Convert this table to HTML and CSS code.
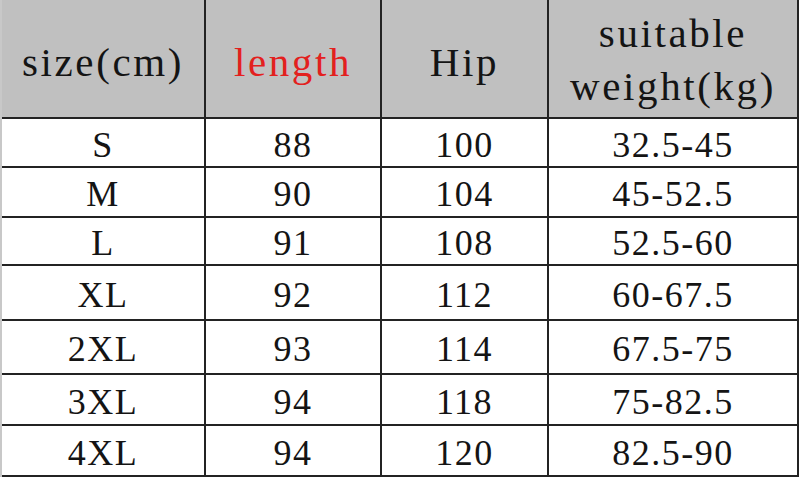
FILE: index.html
```html
<!DOCTYPE html>
<html>
<head>
<meta charset="utf-8">
<link rel="stylesheet" href="styles.css">
</head>
<body>
<div class="page">
  <div class="chart">
    <div class="cell head">size(cm)</div>
    <div class="cell head red">length</div>
    <div class="cell head">Hip</div>
    <div class="cell head two"><span>suitable</span><span>weight(kg)</span></div>

    <div class="cell">S</div><div class="cell">88</div><div class="cell">100</div><div class="cell">32.5-45</div>
    <div class="cell">M</div><div class="cell">90</div><div class="cell">104</div><div class="cell">45-52.5</div>
    <div class="cell">L</div><div class="cell">91</div><div class="cell">108</div><div class="cell">52.5-60</div>
    <div class="cell">XL</div><div class="cell">92</div><div class="cell">112</div><div class="cell">60-67.5</div>
    <div class="cell">2XL</div><div class="cell">93</div><div class="cell">114</div><div class="cell">67.5-75</div>
    <div class="cell">3XL</div><div class="cell">94</div><div class="cell">118</div><div class="cell">75-82.5</div>
    <div class="cell">4XL</div><div class="cell">94</div><div class="cell">120</div><div class="cell">82.5-90</div>
  </div>
</div>
</body>
</html>
```

FILE: styles.css
```css
html, body {
  margin: 0;
  padding: 0;
  background: #ffffff;
}
.page {
  width: 800px;
  height: 477px;
  overflow: hidden;
  display: flex;
  background: #ffffff;
}
.chart {
  margin-left: 2px;
  border-left: 0;
  display: grid;
  grid-template-columns: 202px 174px 165px 248px;
  grid-template-rows: 117px 47px 48px 46px 53px 52px 49px 49px;
  gap: 2px;
  background: #232323;
  border-right: 2px solid #232323;
  border-bottom: 2px solid #232323;
  height: 477px;
  box-sizing: border-box;
  align-self: flex-start;
  font-family: "Liberation Serif", "Noto Sans CJK SC", serif;
  color: #141414;
  position: relative;
}
.page::before {
  content: "";
  width: 2px;
  background: #c8c8c8;
  flex: none;
}
.chart {
  margin-left: 0;
}
.cell {
  background: #ffffff;
  display: flex;
  align-items: center;
  justify-content: center;
  font-size: 36px;
  letter-spacing: 1.5px;
  padding-top: 4px;
  box-sizing: border-box;
}
.head {
  background: #c0c0c0;
  font-size: 41px;
  letter-spacing: 2.6px;
  padding-top: 6px;
}
.red {
  color: #e3201e;
}
.two {
  flex-direction: column;
  line-height: 53px;
  padding-top: 2px;
}
```
